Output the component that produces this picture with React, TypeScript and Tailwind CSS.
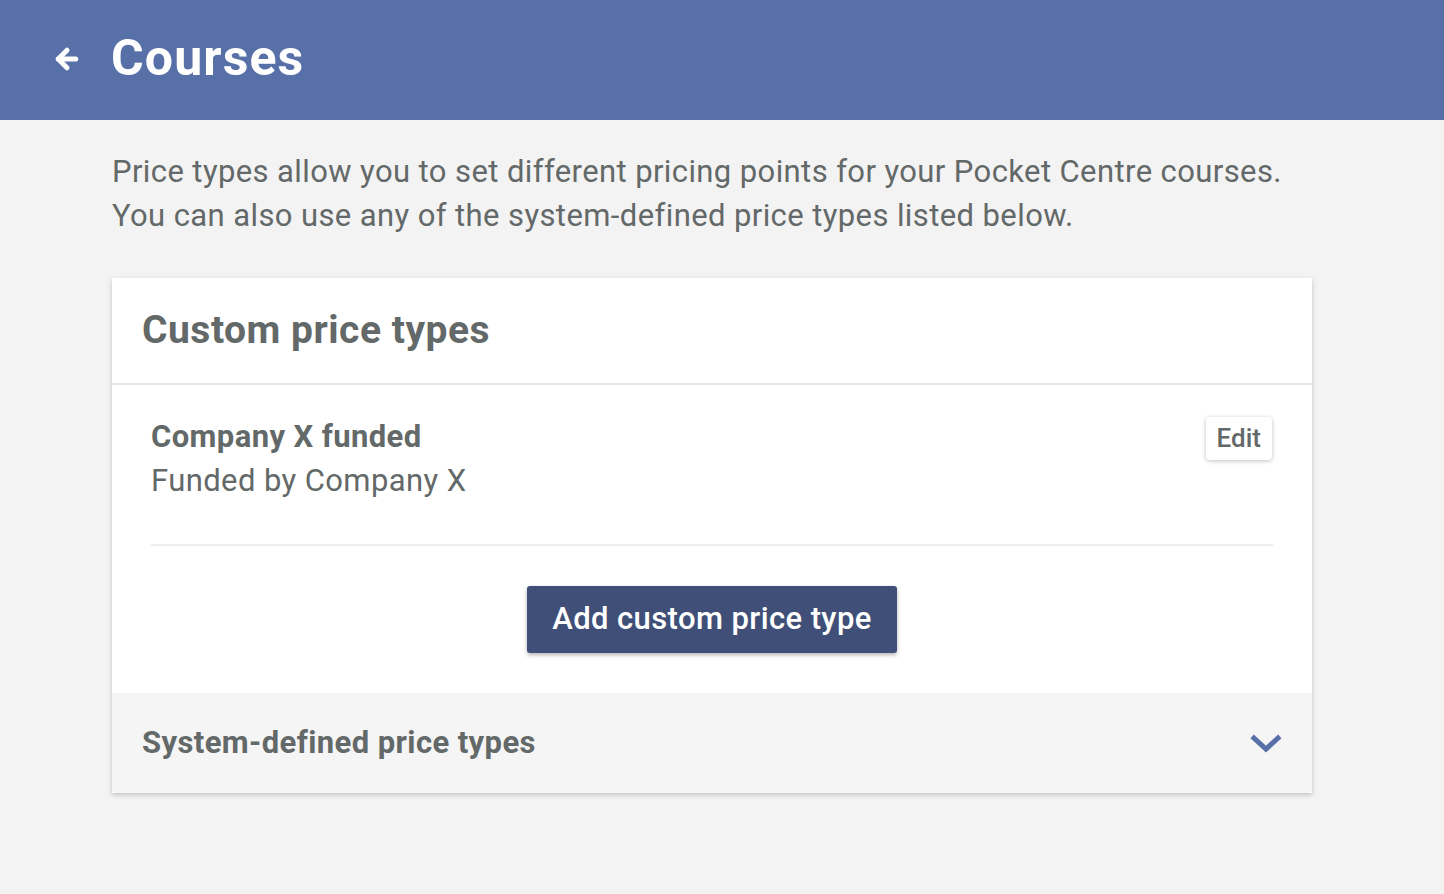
import { ArrowLeft } from "lucide-react";

function ChevronDown() {
  return (
    <svg width="32" height="22" viewBox="0 0 32 22" fill="none">
      <path d="M4 6l12 11L28 6" stroke="#5870a8" strokeWidth="5" strokeLinecap="square" strokeLinejoin="miter" />
    </svg>
  );
}

export default function App() {
  return (
    <div className="min-h-[894px] bg-[#f3f3f3] font-['Roboto',sans-serif] tracking-[0.4px] text-[#636868]">
      <header className="flex h-[120px] items-center bg-[#5870a8] pl-[52px] text-white">
        <ArrowLeft size={30} strokeWidth={4} className="mt-[-3px]" />
        <h1 className="ml-[29px] mt-[-4px] text-[50px] font-bold leading-none tracking-[1.1px]">Courses</h1>
      </header>

      <main className="px-[112px] pt-[30px]">
        <p className="text-[31px] leading-[44px]">
          Price types allow you to set different pricing points for your Pocket Centre courses.
          <br />
          You can also use any of the system-defined price types listed below.
        </p>

        <section className="mt-[40px] w-[1200px] bg-white shadow-[0_2px_5px_rgba(0,0,0,0.2)]">
          <div className="flex h-[107px] items-center border-b-2 border-[#e6e6e6] px-[30px]">
            <h2 className="text-[39px] font-bold leading-none tracking-[0.5px]">Custom price types</h2>
          </div>

          <div className="px-[39px] pt-[30px]">
            <div className="flex items-start justify-between border-b-2 border-[#ededed] pb-[41px]">
              <div className="text-[31px] leading-[44px]">
                <div className="font-bold">Company X funded</div>
                <div>Funded by Company X</div>
              </div>
              <button className="mt-[2px] mr-[1px] h-[43px] rounded-[4px] bg-white px-[11px] text-[26px] font-medium tracking-normal shadow-[0_1px_4px_rgba(0,0,0,0.25)]">
                Edit
              </button>
            </div>
            <div className="flex justify-center py-[40px]">
              <button className="h-[67px] w-[370px] rounded-[3px] bg-[#3f4f78] text-[31px] font-medium text-white shadow-[0_2px_4px_rgba(0,0,0,0.3)]">
                Add custom price type
              </button>
            </div>
          </div>

          <div className="flex h-[100px] items-center justify-between bg-[#f5f5f5] pl-[30px] pr-[30px]">
            <h3 className="text-[31px] font-bold">System-defined price types</h3>
            <ChevronDown />
          </div>
        </section>
      </main>
    </div>
  );
}
